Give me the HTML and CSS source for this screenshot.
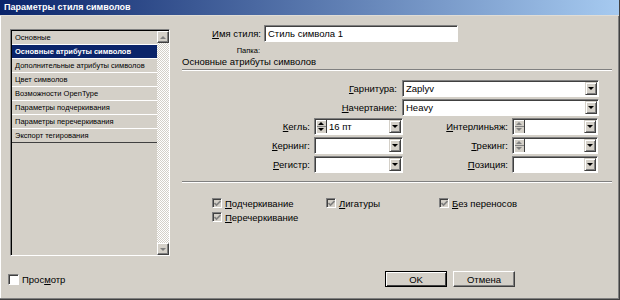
FILE: index.html
```html
<!DOCTYPE html>
<html lang="ru">
<head>
    <meta charset="UTF-8">
    <title>Параметры стиля символов</title>
    <link rel="stylesheet" href="styles.css">
</head>
<body>
    <div class="window">
        <div class="titlebar">Параметры стиля символов</div>

        <div class="dialog-body">
            <!-- Список разделов -->
            <div class="listbox">
                <ul class="list">
                    <li>Основные</li>
                    <li class="selected">Основные атрибуты символов</li>
                    <li>Дополнительные атрибуты символов</li>
                    <li>Цвет символов</li>
                    <li>Возможности OpenType</li>
                    <li>Параметры подчеркивания</li>
                    <li>Параметры перечеркивания</li>
                    <li class="last">Экспорт тегирования</li>
                </ul>
                <div class="scrollbar">
                    <span class="sb-btn"><i class="tri-up grey"></i></span>
                    <span class="sb-track"></span>
                    <span class="sb-btn"><i class="tri-down grey"></i></span>
                </div>
            </div>

            <!-- Панель параметров -->
            <div class="panel">
                <div class="name-row">
                    <label class="name-label"><u>И</u>мя стиля:</label>
                    <div class="textbox">Стиль символа 1</div>
                </div>
                <div class="folder-row">Папка:</div>
                <div class="section-title">Основные атрибуты символов</div>

                <div class="wide-fields">
                    <div class="field-row">
                        <label class="wide-label"><u>Г</u>арнитура:</label>
                        <div class="combo wide"><span class="value">Zaplyv</span><span class="drop"><i class="tri-down"></i></span></div>
                    </div>
                    <div class="field-row">
                        <label class="wide-label"><u>Н</u>ачертание:</label>
                        <div class="combo wide"><span class="value">Heavy</span><span class="drop"><i class="tri-down"></i></span></div>
                    </div>
                </div>

                <div class="field-grid">
                    <label class="grid-label"><u>К</u>егль:</label>
                    <div class="combo"><span class="spin"><i class="tri-up"></i><i class="tri-down"></i></span><span class="value">16 пт</span><span class="drop"><i class="tri-down"></i></span></div>
                    <label class="grid-label"><u>И</u>нтерлиньяж:</label>
                    <div class="combo"><span class="spin"><i class="tri-up grey"></i><i class="tri-down grey"></i></span><span class="value"></span><span class="drop"><i class="tri-down"></i></span></div>

                    <label class="grid-label"><u>К</u>ернинг:</label>
                    <div class="combo"><span class="value"></span><span class="drop"><i class="tri-down"></i></span></div>
                    <label class="grid-label"><u>Т</u>рекинг:</label>
                    <div class="combo"><span class="spin"><i class="tri-up grey"></i><i class="tri-down grey"></i></span><span class="value"></span><span class="drop"><i class="tri-down"></i></span></div>

                    <label class="grid-label"><u>Р</u>егистр:</label>
                    <div class="combo"><span class="value"></span><span class="drop"><i class="tri-down"></i></span></div>
                    <label class="grid-label"><u>П</u>озиция:</label>
                    <div class="combo"><span class="value"></span><span class="drop"><i class="tri-down"></i></span></div>
                </div>

                <div class="separator"></div>

                <div class="checks">
                    <label class="check"><span class="box disabled"><svg width="7" height="7" viewBox="0 0 7 7"><path d="M0.5 3 L2.5 5 L6.5 1" fill="none" stroke="#808080" stroke-width="1.6"/></svg></span><u>П</u>одчеркивание</label>
                    <label class="check"><span class="box disabled"><svg width="7" height="7" viewBox="0 0 7 7"><path d="M0.5 3 L2.5 5 L6.5 1" fill="none" stroke="#808080" stroke-width="1.6"/></svg></span><u>Л</u>игатуры</label>
                    <label class="check"><span class="box disabled"><svg width="7" height="7" viewBox="0 0 7 7"><path d="M0.5 3 L2.5 5 L6.5 1" fill="none" stroke="#808080" stroke-width="1.6"/></svg></span><u>Б</u>ез переносов</label>
                    <label class="check"><span class="box disabled"><svg width="7" height="7" viewBox="0 0 7 7"><path d="M0.5 3 L2.5 5 L6.5 1" fill="none" stroke="#808080" stroke-width="1.6"/></svg></span><u>П</u>еречеркивание</label>
                </div>
            </div>
        </div>

        <!-- Нижняя панель -->
        <div class="footer">
            <label class="check preview"><span class="box"></span>Прос<u>м</u>отр</label>
            <div class="buttons">
                <button class="default">OK</button>
                <button>Отмена</button>
            </div>
        </div>
    </div>
</body>
</html>
```

FILE: styles.css
```css
* {
    box-sizing: border-box;
}
body {
    margin: 0;
    font-family: "Liberation Sans", Arial, sans-serif;
    font-size: 9.5px;
    color: #000;
}
.window {
    width: 620px;
    height: 300px;
    background: #d4d0c8;
    border-right: 1px solid #404040;
    border-bottom: 1px solid #404040;
    box-shadow: inset -1px -1px #808080, inset 1px 0 #fff;
}
.titlebar {
    height: 16px;
    padding-left: 4px;
    line-height: 15px;
    font-size: 9px;
    font-weight: bold;
    color: #fff;
    background: linear-gradient(to right, #0a246a, #a6caf0);
    border-bottom: 1px solid #e0ddd6;
}
.dialog-body {
    display: flex;
    height: 240px;
}

/* список разделов */
.listbox {
    display: flex;
    width: 160px;
    height: 227px;
    margin: 13px 0 0 10px;
    border: 1px solid;
    border-color: #808080 #fff #fff #808080;
    box-shadow: inset 1px 1px #000;
}
.list {
    flex: 1;
    list-style: none;
    margin: 0;
    padding: 1px 0 0 1px;
}
.list li {
    height: 14px;
    padding-left: 3px;
    line-height: 13px;
    font-size: 7.5px;
    border-bottom: 1px solid #fff;
    white-space: nowrap;
}
.list li.selected {
    background: #0a246a;
    color: #fff;
    font-weight: bold;
}
.list li.last {
    border-bottom-color: #404040;
}
.scrollbar {
    display: flex;
    flex-direction: column;
    width: 12px;
    padding-top: 1px;
}
.sb-track {
    flex: 1;
    background: repeating-conic-gradient(#fff 0 25%, #d4d0c8 0 50%) 0 0 / 2px 2px;
}
.sb-btn {
    display: flex;
    align-items: center;
    justify-content: center;
    height: 12px;
    background: #d4d0c8;
    border: 1px solid;
    border-color: #fff #404040 #404040 #fff;
    box-shadow: inset -1px -1px #808080;
}

/* треугольники */
.tri-up, .tri-down {
    display: block;
    width: 0;
    height: 0;
    border-left: 3px solid transparent;
    border-right: 3px solid transparent;
}
.tri-up {
    border-bottom: 3px solid #000;
}
.tri-down {
    border-top: 3px solid #000;
}
.tri-up.grey {
    border-bottom-color: #808080;
}
.tri-down.grey {
    border-top-color: #808080;
}

/* панель */
.panel {
    width: 432px;
    margin-left: 10px;
}
.name-row {
    display: flex;
    align-items: center;
    margin-top: 9px;
}
.name-label {
    width: 82px;
    padding-right: 1px;
    text-align: right;
}
.textbox, .combo {
    height: 17px;
    background: #fff;
    border: 1px solid;
    border-color: #808080 #fff #fff #808080;
    box-shadow: inset 1px 1px #404040;
}
.textbox {
    width: 194px;
    margin-left: 2px;
    padding: 1px 0 0 3px;
    line-height: 14px;
}
.folder-row {
    width: 80px;
    margin-top: 4px;
    line-height: 9px;
    font-size: 7.5px;
    text-align: right;
}
.section-title {
    width: 430px;
    margin: 1px 0 0 2px;
    height: 14px;
    line-height: 12px;
    border-bottom: 1px solid #808080;
    box-shadow: 0 1px 0 #fff;
}
.wide-fields {
    display: flex;
    flex-direction: column;
    gap: 2px;
    margin-top: 10px;
}
.field-row {
    display: flex;
    align-items: center;
}
.wide-label {
    width: 218px;
    padding-right: 1px;
    text-align: right;
}
.combo {
    display: flex;
    padding: 1px;
}
.combo.wide {
    width: 197px;
    margin-left: 4px;
}
.combo .value {
    flex: 1;
    padding-left: 2px;
    line-height: 13px;
}
.drop {
    display: flex;
    align-items: center;
    justify-content: center;
    width: 12px;
    background: #d4d0c8;
    border: 1px solid;
    border-color: #d4d0c8 #404040 #404040 #d4d0c8;
    box-shadow: inset 1px 1px #fff, inset -1px -1px #808080;
}
.spin {
    display: flex;
    flex-direction: column;
    justify-content: space-around;
    align-items: center;
    width: 11px;
    border-right: 1px solid #404040;
    box-shadow: inset 1px 1px #fff;
    background: linear-gradient(#d4d0c8 6px, #808080 6px, #808080 7px, #d4d0c8 7px);
}
.field-grid {
    display: grid;
    grid-template-columns: 131px 89px 103px 86px;
    grid-auto-rows: 17px;
    column-gap: 3px;
    row-gap: 2px;
    margin-top: 2px;
    align-items: center;
}
.grid-label {
    padding-right: 1px;
    text-align: right;
}
.separator {
    width: 430px;
    margin: 8px 0 0 2px;
    border-top: 1px solid #808080;
    border-bottom: 1px solid #fff;
}
.checks {
    display: grid;
    grid-template-columns: 114px 113px 120px;
    grid-auto-rows: 14px;
    margin-top: 13px;
    padding-left: 32px;
}
.check {
    display: flex;
    align-items: center;
    white-space: nowrap;
}
.box {
    display: flex;
    align-items: center;
    justify-content: center;
    width: 10px;
    height: 10px;
    margin-right: 3px;
    background: #fff;
    border: 1px solid;
    border-color: #808080 #fff #fff #808080;
    box-shadow: inset 1px 1px #404040;
}
.box.disabled {
    background: #d4d0c8;
}

/* нижняя панель */
.footer {
    display: flex;
    justify-content: space-between;
    align-items: center;
    padding: 15px 104px 0 8px;
}
.preview .box {
    width: 11px;
    height: 11px;
}
.buttons {
    display: flex;
    gap: 6px;
}
button {
    width: 62px;
    height: 16px;
    padding: 0;
    font-family: "Liberation Sans", Arial, sans-serif;
    font-size: 9.5px;
    color: #000;
    background: #d4d0c8;
    border: 1px solid;
    border-color: #fff #404040 #404040 #fff;
    box-shadow: inset -1px -1px #808080;
}
button.default {
    border-color: #000;
    box-shadow: inset 1px 1px #fff, inset -1px -1px #404040;
}
```
